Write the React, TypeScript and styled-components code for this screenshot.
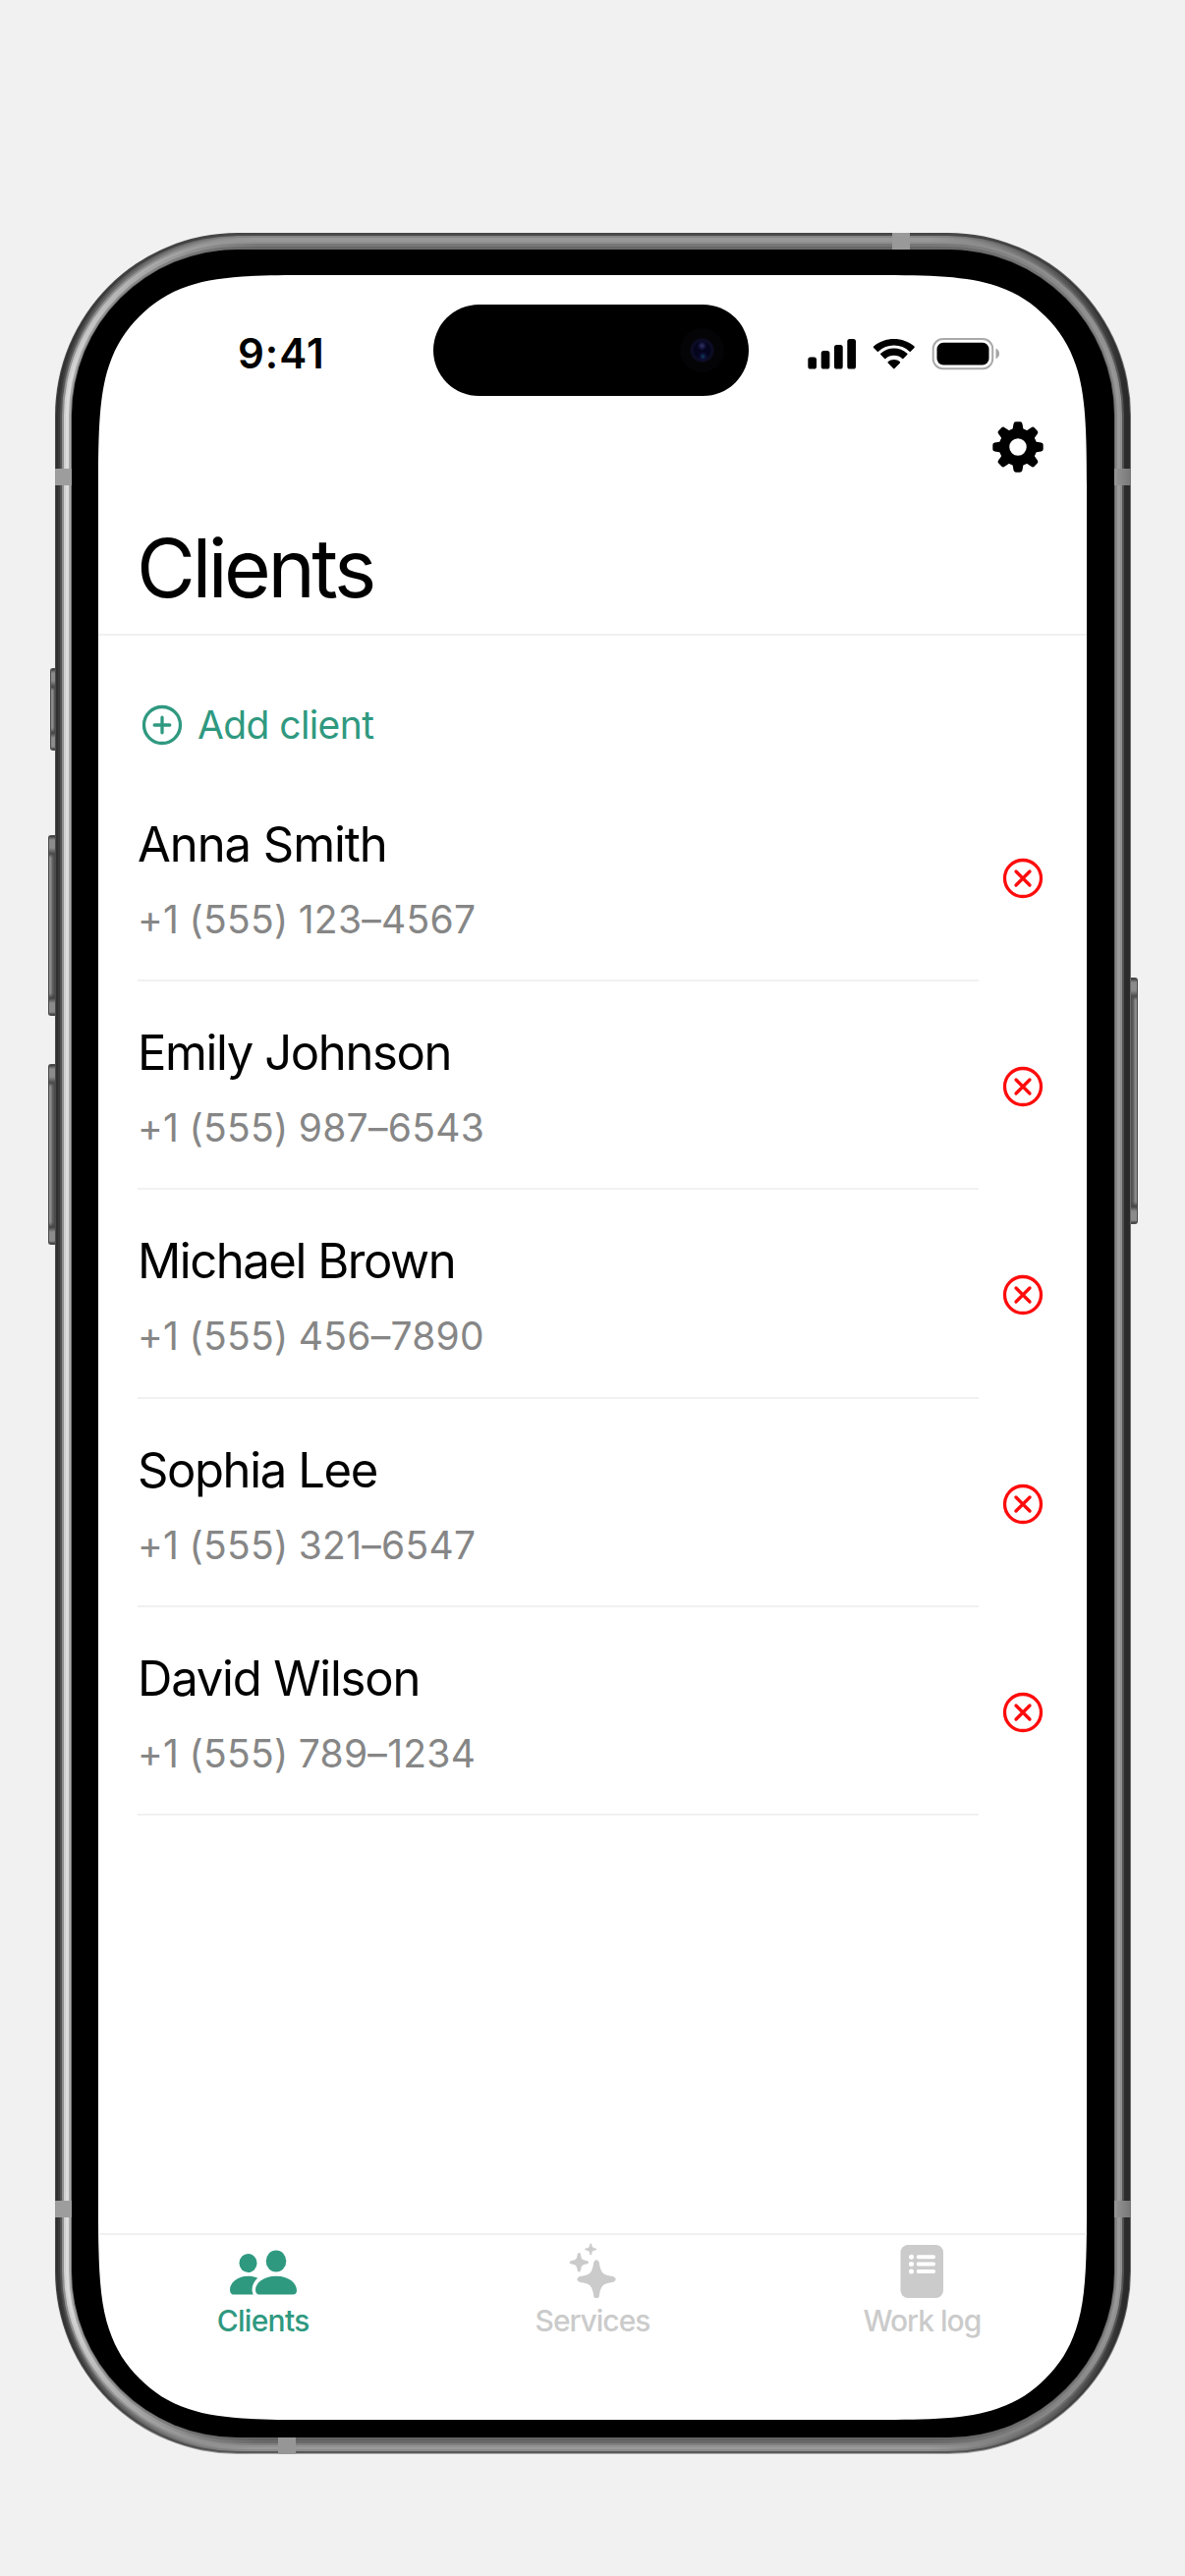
import React from "react";
import styled, { createGlobalStyle } from "styled-components";

type Side = { left: string; top: string; right: string; bottom: string };

const GlobalStyle = createGlobalStyle`
  *, *::before, *::after { box-sizing: border-box; }
  body {
    margin: 0;
    background: #f1f1f1;
    font-family: Inter, "Liberation Sans", sans-serif;
    color: #000;
    overflow: hidden;
  }
`;

const Page = styled.main`
  width: 1206px;
  height: 2622px;
  padding: 237px 55px 0 56px;
`;

const Device = styled.div`
  position: relative;
  width: 1095px;
  height: 2261px;
`;

const Ring = styled.div<{ $size: number; $radius: number; $tone: Side }>`
  width: 100%;
  height: 100%;
  padding: ${(p) => p.$size}px;
  border-radius: ${(p) => p.$radius}px;
  background: ${({ $tone: t }) => `conic-gradient(
    ${t.top} 0deg 17deg, ${t.right} 29deg 151deg, ${t.bottom} 163deg 197deg,
    ${t.left} 209deg 331deg, ${t.top} 343deg 360deg)`};
`;

const Bezel = styled.div`
  width: 100%;
  height: 100%;
  padding: 26px 28px 18px 27px;
  border-radius: 169px;
  background: #000;
`;

const Screen = styled.div`
  width: 1006px;
  height: 2183px;
  display: flex;
  flex-direction: column;
  background: #fff;
  clip-path: path("M215 0H791C846 0 885 1 914 11C935 18 950 28 964 42C978 56 988 71 995 92C1005 121 1006 160 1006 215V1968C1006 2023 1005 2062 995 2091C988 2112 978 2127 964 2141C950 2155 935 2165 914 2172C885 2182 846 2183 791 2183H215C160 2183 121 2182 92 2172C71 2165 56 2155 42 2141C28 2127 18 2112 11 2091C1 2062 0 2023 0 1968V215C0 160 1 121 11 92C18 71 28 56 42 42C56 28 71 18 92 11C121 1 160 0 215 0Z");
`;

const SideKey = styled.div<{ $edge: "left" | "right"; $top: number; $height: number; $width: number }>`
  position: absolute;
  ${(p) => p.$edge}: ${(p) => -p.$width}px;
  top: ${(p) => p.$top}px;
  width: ${(p) => p.$width}px;
  height: ${(p) => p.$height}px;
  border: 1px solid #4a4a4a;
  border-${(p) => (p.$edge === "left" ? "right" : "left")}: 0;
  border-radius: ${(p) => (p.$edge === "left" ? "3px 0 0 3px" : "0 3px 3px 0")};
  background:
    linear-gradient(#3a3a3a, #8b8b8b 4px, #8b8b8b 12px, #4a4a4a 18px, transparent 22px, transparent calc(100% - 22px), #444 calc(100% - 17px), #8b8b8b calc(100% - 12px), #8b8b8b calc(100% - 3px), #3a3a3a),
    linear-gradient(${(p) => (p.$edge === "left" ? "to right" : "to left")}, #8a8a8a 0 2px, #666 3px, #484848);
`;

const Band = styled.div<{ $x: number; $y: number; $vertical?: boolean; $paint: string }>`
  position: absolute;
  left: ${(p) => p.$x}px;
  top: ${(p) => p.$y}px;
  width: ${(p) => (p.$vertical ? 18 : 17)}px;
  height: 17px;
  background: ${(p) => p.$paint};
`;

const StatusBar = styled.header`
  position: relative;
  flex: none;
  height: 130px;
  display: flex;
  align-items: flex-start;
  justify-content: space-between;
  padding: 55px 88px 0 142px;
`;

const Clock = styled.time`
  height: 50px;
  font-size: 42px;
  line-height: 50px;
  font-weight: 600;
  letter-spacing: 1px;
`;

const StatusIcons = styled.svg`
  display: block;
  width: 198px;
  height: 34px;
  margin-top: 8px;
`;

const Island = styled.div`
  position: absolute;
  left: 341px;
  top: 30px;
  width: 321px;
  height: 93px;
  display: flex;
  align-items: center;
  justify-content: flex-end;
  padding-right: 25px;
  border-radius: 47px;
  background: #000;
`;

const Lens = styled.div`
  width: 45px;
  height: 45px;
  border-radius: 50%;
  background:
    radial-gradient(circle at 50% 40%, #343465 0, rgba(28, 28, 80, 0.6) 3px, transparent 5px),
    radial-gradient(circle at 52% 64%, #0d4350 0, rgba(20, 20, 80, 0.5) 3px, transparent 5px),
    radial-gradient(circle, #04041c 0 8px, #0d0d28 10px, #090918 12px, #040305 13px);
`;

const TitleBar = styled.section`
  flex: none;
  height: 237px;
  display: flex;
  flex-direction: column;
  padding: 18px 43px 0 39px;
  border-bottom: 2px solid #f1f1f1;
`;

const SettingsButton = styled.button`
  align-self: flex-end;
  width: 54px;
  height: 54px;
  padding: 0;
  border: 0;
  background: none;

  svg { display: block; }
`;

const Title = styled.h1`
  margin: 47px 0 0;
  font-size: 82px;
  line-height: 100px;
  font-weight: 400;
  letter-spacing: -3.5px;
`;

const Content = styled.section`
  flex: 1;
  padding: 66px 43px 0 40px;
`;

const AddButton = styled.button`
  display: flex;
  align-items: center;
  gap: 15px;
  height: 50px;
  padding: 0 0 0 4px;
  border: 0;
  background: none;
  color: #2f9980;
  font: 400 39px/50px Inter, "Liberation Sans", sans-serif;
  letter-spacing: -0.6px;

  svg { display: block; flex: none; }
`;

const List = styled.ul`
  margin: 24px 0 0;
  padding: 0;
  list-style: none;
`;

const Row = styled.li`
  display: flex;
  align-items: center;
  justify-content: space-between;
  height: 212.2px;
`;

const Person = styled.div`
  align-self: stretch;
  width: 856px;
  padding-top: 42px;
  border-bottom: 2px solid #f1f1f1;
`;

const Name = styled.div<{ $tracking: number }>`
  font-size: 49px;
  line-height: 62px;
  letter-spacing: ${(p) => p.$tracking}px;
`;

const Phone = styled.div`
  margin-top: 21px;
  font-size: 39px;
  line-height: 48px;
  letter-spacing: 0.28px;
  word-spacing: -1px;
  color: #868686;
`;

const RemoveButton = styled.button`
  width: 42px;
  height: 42px;
  margin: 2px 1px 0 0;
  padding: 0;
  border: 0;
  background: none;
  color: #fe0c0c;

  svg { display: block; }
`;

const TabBar = styled.nav`
  flex: none;
  height: 190px;
  display: grid;
  grid-template-columns: repeat(3, 1fr);
  border-top: 2px solid #f1f1f1;
`;

const Tab = styled.div<{ $active?: boolean }>`
  display: flex;
  flex-direction: column;
  align-items: center;
  padding-top: 8px;
  color: ${(p) => (p.$active ? "#2f9980" : "#cbcbcb")};
  font-size: 30px;
  line-height: 38px;
  font-weight: 500;
  letter-spacing: ${(p) => (p.$active ? -0.7 : -1)}px;

  svg { display: block; margin-bottom: 4px; }
`;

const rings: { size: number; tone: Side }[] = [
  { size: 1, tone: { left: "#4b4b4b", top: "#444", right: "#6a6a6a", bottom: "#a9a9a9" } },
  { size: 2, tone: { left: "#303030", top: "#4b4b4b", right: "#2b2b2b", bottom: "#5a5a5a" } },
  { size: 2, tone: { left: "#383838", top: "#858585", right: "#2a2a2a", bottom: "#8c8c8c" } },
  { size: 2, tone: { left: "#505050", top: "#989898", right: "#2c2c2c", bottom: "#9a9a9a" } },
  { size: 2, tone: { left: "#8e8e8e", top: "#979797", right: "#505050", bottom: "#929292" } },
  { size: 2, tone: { left: "#cfcfcf", top: "#8e8e8e", right: "#8f8f8f", bottom: "#7f7f7f" } },
  { size: 3, tone: { left: "#dcdcdc", top: "#777", right: "#999", bottom: "#696969" } },
  { size: 2, tone: { left: "#aaa", top: "#666", right: "#858585", bottom: "#606060" } },
  { size: 1, tone: { left: "#777", top: "#6a6a6a", right: "#666", bottom: "#666" } },
];

const MetalFrame = ({ children }: { children: React.ReactNode }) => {
  let radius = 186;
  const radii = rings.map((r) => {
    const current = radius;
    radius -= r.size;
    return current;
  });
  return rings.reduceRight<React.ReactNode>(
    (inner, ring, i) => (
      <Ring $size={ring.size} $radius={radii[i]} $tone={ring.tone}>
        {inner}
      </Ring>
    ),
    children,
  );
};

const StatusGlyphs = () => (
  <StatusIcons viewBox="0 0 198 34">
    <g fill="#000">
      <rect x="2.3" y="20.5" width="8.7" height="12" rx="2.6" />
      <rect x="15.7" y="14" width="8.7" height="18.5" rx="2.6" />
      <rect x="29" y="8" width="8.7" height="24.5" rx="2.6" />
      <rect x="42.3" y="2" width="8.7" height="30.5" rx="2.6" />
      <path d="M89.8 8.5c6 0 11.5 2.2 15.8 6.2.3.3.8.3 1.2 0l3.7-3.8c.4-.4.4-1 0-1.4-11.5-10-29.9-10-41.4 0-.4.4-.4 1 0 1.4l3.7 3.8c.3.3.8.3 1.2 0 4.3-4 9.8-6.2 15.8-6.2Z" />
      <path d="M89.8 18.800c3.200 0 6.100 1.200 8.400 3.100.4.4.9.3 1.200 0l3.900-3.800c.4-.4.4-.9 0-1.300-7.600-7-19.400-7-27 0-.4.4-.4.9 0 1.300l3.900 3.800c.3.3.8.4 1.200 0 2.300-1.900 5.200-3.100 8.400-3.100Z" />
      <path d="m90.5 32.100 5.400-5.500c.4-.4.4-.9 0-1.300-3.500-3-8.700-3-12.200 0-.4.4-.4.9 0 1.300l5.400 5.500c.4.4 1 .4 1.400 0Z" />
      <rect x="133.5" y="5.8" width="53" height="22.6" rx="6.5" />
      <path d="M193.500 11.800v10.400c2.300-.9 3.500-2.900 3.500-5.200s-1.200-4.300-3.500-5.200Z" fill="#a6a6a6" />
    </g>
    <rect x="129.7" y="2" width="60.5" height="30.2" rx="10" fill="none" stroke="#a9a9a9" strokeWidth="2" />
  </StatusIcons>
);

const GearIcon = () => {
  const tooth = "M-5.3-19 L-4.5-23.6Q-4.1-25.7-2.2-25.7H2.2Q4.1-25.7 4.5-23.6L5.3-19L7-14H-7Z";
  return (
    <svg width="54" height="54" viewBox="-27 -27 54 54">
      {[0, 45, 90, 135, 180, 225, 270, 315].map((a) => (
        <path key={a} d={tooth} transform={`rotate(${a})`} />
      ))}
      <circle r="14" fill="none" stroke="#000" strokeWidth="10.5" />
    </svg>
  );
};

const CircleGlyph = ({ cross }: { cross?: boolean }) => (
  <svg width="42" height="42" viewBox="0 0 42 42" fill="none" stroke="currentColor" strokeWidth="3.3" strokeLinecap="round">
    <circle cx="21" cy="21" r="18.5" />
    <path d={cross ? "M14 14l14 14M28 14l-14 14" : "M21 13.2v15.6M13.2 21h15.6"} />
  </svg>
);

const PeopleIcon = () => (
  <svg width="70" height="56" viewBox="0 0 70 56" fill="currentColor">
    <ellipse cx="19.5" cy="20.5" rx="9" ry="9.6" />
    <path d="M1 47.5C1 41 8 33.7 19.5 33.7c3.700 0 7 .8 9.700 2.100-5 4.300-7.200 11.500-4.500 16.700H4.500C2.200 52.500 1 50 1 47.5Z" />
    <ellipse cx="48" cy="18.5" rx="10.3" ry="11" />
    <path d="M27 47.5C27 41 35 33.7 48 33.7S69 41 69 48.5c0 2.800-1.500 4-3.800 4H30.800C28.500 52.500 27 51 27 47.5Z" />
  </svg>
);

const star = (r: number) => {
  const t = r * 0.09;
  const b = r * 0.3;
  const k = r * 0.17;
  const right = `C${k} ${-b} ${b} ${-k} ${r - t} ${-t}Q${r + t * 0.6} 0 ${r - t} ${t}`;
  const lower = `C${b} ${k} ${k} ${b} ${t} ${r - t}Q0 ${r + t * 0.6} ${-t} ${r - t}`;
  const left = `C${-k} ${b} ${-b} ${k} ${-r + t} ${t}Q${-r - t * 0.6} 0 ${-r + t} ${-t}`;
  const upper = `C${-b} ${-k} ${-k} ${-b} ${-t} ${-r + t}Q0 ${-r - t * 0.6} ${t} ${-r + t}`;
  return `M${t} ${-r + t}${right}${lower}${left}${upper}Z`;
};

const SparkleIcon = () => (
  <svg width="56" height="56" viewBox="0 0 56 56" fill="currentColor" stroke="currentColor" strokeLinejoin="round">
    <path d={star(19)} transform="translate(32 37)" strokeWidth="2" />
    <path d={star(9.2)} transform="translate(14.3 19.8)" strokeWidth="1.4" />
    <path d={star(5.8)} transform="translate(26.2 6.4)" strokeWidth="0.7" />
  </svg>
);

const LogIcon = () => (
  <svg width="44" height="56" viewBox="0 0 44 56">
    <rect x="0.5" y="2" width="43.5" height="54" rx="7.5" fill="currentColor" />
    {[14.2, 21.5, 29].map((y) => (
      <g key={y} fill="#fff">
        <circle cx="11.5" cy={y} r="2.5" />
        <rect x="16.7" y={y - 1.9} width="19.3" height="3.9" rx="1.9" />
      </g>
    ))}
  </svg>
);

const clients = [
  { name: "Anna Smith", phone: "+1 (555) 123–4567", tracking: -1.05 },
  { name: "Emily Johnson", phone: "+1 (555) 987–6543", tracking: -1.4 },
  { name: "Michael Brown", phone: "+1 (555) 456–7890", tracking: -1.45 },
  { name: "Sophia Lee", phone: "+1 (555) 321–6547", tracking: -1.4 },
  { name: "David Wilson", phone: "+1 (555) 789–1234", tracking: -1.2 },
];

const tabs = [
  { label: "Clients", icon: <PeopleIcon /> },
  { label: "Services", icon: <SparkleIcon /> },
  { label: "Work log", icon: <LogIcon /> },
];

export default function App() {
  return (
    <Page>
      <GlobalStyle />
      <Device>
        <SideKey $edge="left" $top={443} $height={84} $width={5} />
        <SideKey $edge="left" $top={613} $height={184} $width={7} />
        <SideKey $edge="left" $top={846} $height={184} $width={7} />
        <SideKey $edge="right" $top={758} $height={251} $width={7} />
        <MetalFrame>
          <Bezel>
            <Screen>
              <StatusBar>
                <Clock>9:41</Clock>
                <Island>
                  <Lens />
                </Island>
                <StatusGlyphs />
              </StatusBar>
              <TitleBar>
                <SettingsButton aria-label="Settings">
                  <GearIcon />
                </SettingsButton>
                <Title>Clients</Title>
              </TitleBar>
              <Content>
                <AddButton>
                  <CircleGlyph />
                  Add client
                </AddButton>
                <List>
                  {clients.map((c) => (
                    <Row key={c.name}>
                      <Person>
                        <Name $tracking={c.tracking}>{c.name}</Name>
                        <Phone>{c.phone}</Phone>
                      </Person>
                      <RemoveButton aria-label="Remove">
                        <CircleGlyph cross />
                      </RemoveButton>
                    </Row>
                  ))}
                </List>
              </Content>
              <TabBar>
                {tabs.map((t, i) => (
                  <Tab key={t.label} $active={i === 0}>
                    {t.icon}
                    {t.label}
                  </Tab>
                ))}
              </TabBar>
            </Screen>
          </Bezel>
        </MetalFrame>
        <Band $x={0} $y={240} $paint="#9d9d9d" />
        <Band $x={0} $y={2003} $paint="#9d9d9d" />
        <Band $x={1078} $y={240} $paint="linear-gradient(to right, #969696, #777)" />
        <Band $x={1078} $y={2003} $paint="linear-gradient(to right, #969696, #777)" />
        <Band $x={852} $y={0} $vertical $paint="#999" />
        <Band $x={227} $y={2244} $vertical $paint="#969696" />
      </Device>
    </Page>
  );
}
